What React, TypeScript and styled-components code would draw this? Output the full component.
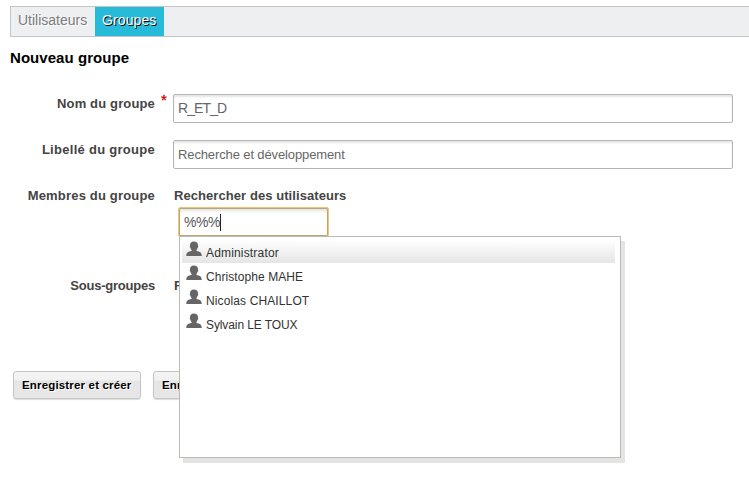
import React from 'react';
import styled, { createGlobalStyle } from 'styled-components';

const GlobalStyle = createGlobalStyle`
  * { box-sizing: border-box; }
  html, body { margin: 0; background: #fff; overflow: hidden; }
  body { font-family: "Liberation Sans", Arial, sans-serif; font-size: 13px; color: #444; }
`;

const Page = styled.main`
  width: 749px;
  height: 477px;
  padding: 6px 0 0 10px;
  overflow: hidden;
`;

const TabBar = styled.nav`
  display: flex;
  height: 31px;
  border: 1px solid #c3c5c6;
  border-right: 0;
  background: #edeff1;
`;

const Tab = styled.a<{ $active?: boolean }>`
  width: ${p => (p.$active ? 69 : 84)}px;
  padding-left: 7px;
  font-size: 14px;
  line-height: 27px;
  letter-spacing: ${p => (p.$active ? '0.1px' : '0')};
  white-space: nowrap;
  color: ${p => (p.$active ? '#fff' : '#7b7b7b')};
  background: ${p => (p.$active ? '#28bbd9' : 'transparent')};
  text-shadow: ${p => (p.$active ? '1px 1px 0 #000' : '1px 1px 0 #fff')};
`;

const Title = styled.h1`
  margin: 12px 0 0;
  font-size: 15px;
  line-height: 18px;
  height: 18px;
  letter-spacing: 0.05px;
  color: #000;
`;

const Row = styled.section<{ $height: number }>`
  display: grid;
  grid-template-columns: 145px 18px 560px;
  height: ${p => p.$height}px;
`;

const Fields = styled.div`
  padding-top: 27px;
`;

const Label = styled.label<{ $tracking?: number }>`
  padding-top: 2px;
  text-align: right;
  font-weight: bold;
  line-height: 15px;
  letter-spacing: ${p => p.$tracking ?? 0}px;
  color: #444;
  white-space: nowrap;
`;

const Required = styled.span`
  padding: 0 0 0 6px;
  font-size: 15px;
  line-height: 12px;
  color: #c00;
  -webkit-text-stroke: 0.3px #c00;
`;

const Input = styled.input<{ $size?: number; $tracking?: number }>`
  width: 560px;
  height: 29px;
  padding: 0 4px 1px;
  border: 1px solid #b5b5b5;
  border-radius: 2px;
  background: #fff;
  box-shadow: inset 0 2px 2px #e6e6e6;
  font-family: inherit;
  font-size: ${p => p.$size ?? 13}px;
  letter-spacing: ${p => p.$tracking ?? 0}px;
  color: #666;
  outline: none;
`;

const Picker = styled.div`
  position: relative;
  padding: 2px 0 0 1px;
`;

const PickerLabel = styled.div`
  height: 15px;
  line-height: 15px;
  letter-spacing: 0.07px;
  font-weight: bold;
  white-space: nowrap;
`;

const SearchBox = styled.div`
  display: flex;
  align-items: center;
  width: 151px;
  height: 30px;
  margin: 4px 0 0 4px;
  padding: 0 0 0 5px;
  border: 1px solid #f0c674;
  border-radius: 2px;
  box-shadow: inset 0 0 0 1px #b9a872, inset 0 3px 3px #e2e2e2;
  font-size: 14px;
  letter-spacing: -0.4px;
  color: #555;
`;

const Caret = styled.span`
  width: 1px;
  height: 17px;
  background: #222;
`;

const Suggestions = styled.ul`
  position: absolute;
  z-index: 2;
  left: 6px;
  top: 50px;
  width: 442px;
  height: 222px;
  margin: 0;
  padding: 3px 5px 0 2px;
  list-style: none;
  background: #fff;
  border: 1px solid #bdb9b3;
  box-shadow: 4px 5px 0 #e4e4e4;
`;

const Suggestion = styled.li<{ $selected?: boolean; $tracking: number }>`
  display: flex;
  align-items: flex-start;
  height: ${p => (p.$selected ? 23 : 24)}px;
  margin-bottom: ${p => (p.$selected ? 1 : 0)}px;
  padding: 1px 0 0 4px;
  background: ${p => (p.$selected ? 'linear-gradient(#fff, #e5e5e5)' : 'transparent')};
  font-size: 12px;
  line-height: 24px;
  letter-spacing: ${p => p.$tracking}px;
  color: #333;
  white-space: nowrap;
  svg { flex: none; margin: 0 4px 0 0; }
`;

const Actions = styled.footer`
  display: flex;
  gap: 12px;
  padding-left: 3px;
`;

const Button = styled.button`
  height: 28px;
  width: 128px;
  flex: none;
  padding: 0 0 0 8px;
  text-align: left;
  border: 1px solid #c5c5c5;
  border-radius: 3px;
  background: linear-gradient(#f4f4f4 0, #f1f1f1 30%, #e5e5e5 36%, #e7e7e7);
  box-shadow: 0 1px 1px #ddd;
  font: bold 11.5px "Liberation Sans", Arial, sans-serif;
  letter-spacing: 0.17px;
  color: #000;
  text-shadow: 1px 1px 0 #fff;
  white-space: nowrap;
`;

const UserIcon = () => (
  <svg width="16" height="16" viewBox="0 0 16 16" fill="#666">
    <path d="M8 .6C5.2.6 3.7 2.3 4 4.8c-.4.7-.1 1.7.4 2C4.7 8 5.1 8.6 5.7 9.1v.5C4.6 10.8.3 10.5.3 14.2v.8h15.4v-.8c0-3.7-4.3-3.4-5.4-4.6v-.5c.6-.5 1-1.1 1.3-2.3.5-.3.8-1.3.4-2C12.3 2.3 10.8.6 8 .6Z" />
  </svg>
);

const users = [
  { name: 'Administrator', tracking: 0.17 },
  { name: 'Christophe MAHE', tracking: 0.07 },
  { name: 'Nicolas CHAILLOT', tracking: 0.12 },
  { name: 'Sylvain LE TOUX', tracking: -0.1 },
];

export default function App() {
  return (
    <>
      <GlobalStyle />
      <Page>
        <TabBar>
          <Tab>Utilisateurs</Tab>
          <Tab $active>Groupes</Tab>
        </TabBar>
        <Title>Nouveau groupe</Title>
        <Fields>
          <Row $height={46}>
            <Label $tracking={0.15}>Nom du groupe</Label>
            <Required>*</Required>
            <Input $size={14} $tracking={-0.9} defaultValue="R_ET_D" />
          </Row>
          <Row $height={46}>
            <Label $tracking={0.28}>Libellé du groupe</Label>
            <span />
            <Input $tracking={-0.12} defaultValue="Recherche et développement" />
          </Row>
          <Row $height={90}>
            <Label $tracking={0.18}>Membres du groupe</Label>
            <span />
            <Picker>
              <PickerLabel>Rechercher des utilisateurs</PickerLabel>
              <SearchBox>%%%<Caret /></SearchBox>
              <Suggestions>
                {users.map(({ name, tracking }, index) => (
                  <Suggestion key={name} $selected={index === 0} $tracking={tracking}>
                    <UserIcon />
                    {name}
                  </Suggestion>
                ))}
              </Suggestions>
            </Picker>
          </Row>
          <Row $height={95}>
            <Label $tracking={-0.22}>Sous-groupes</Label>
            <span />
            <Picker>
              <PickerLabel>R</PickerLabel>
            </Picker>
          </Row>
        </Fields>
        <Actions>
          <Button>Enregistrer et créer</Button>
          <Button>Enregistrer</Button>
        </Actions>
      </Page>
    </>
  );
}
